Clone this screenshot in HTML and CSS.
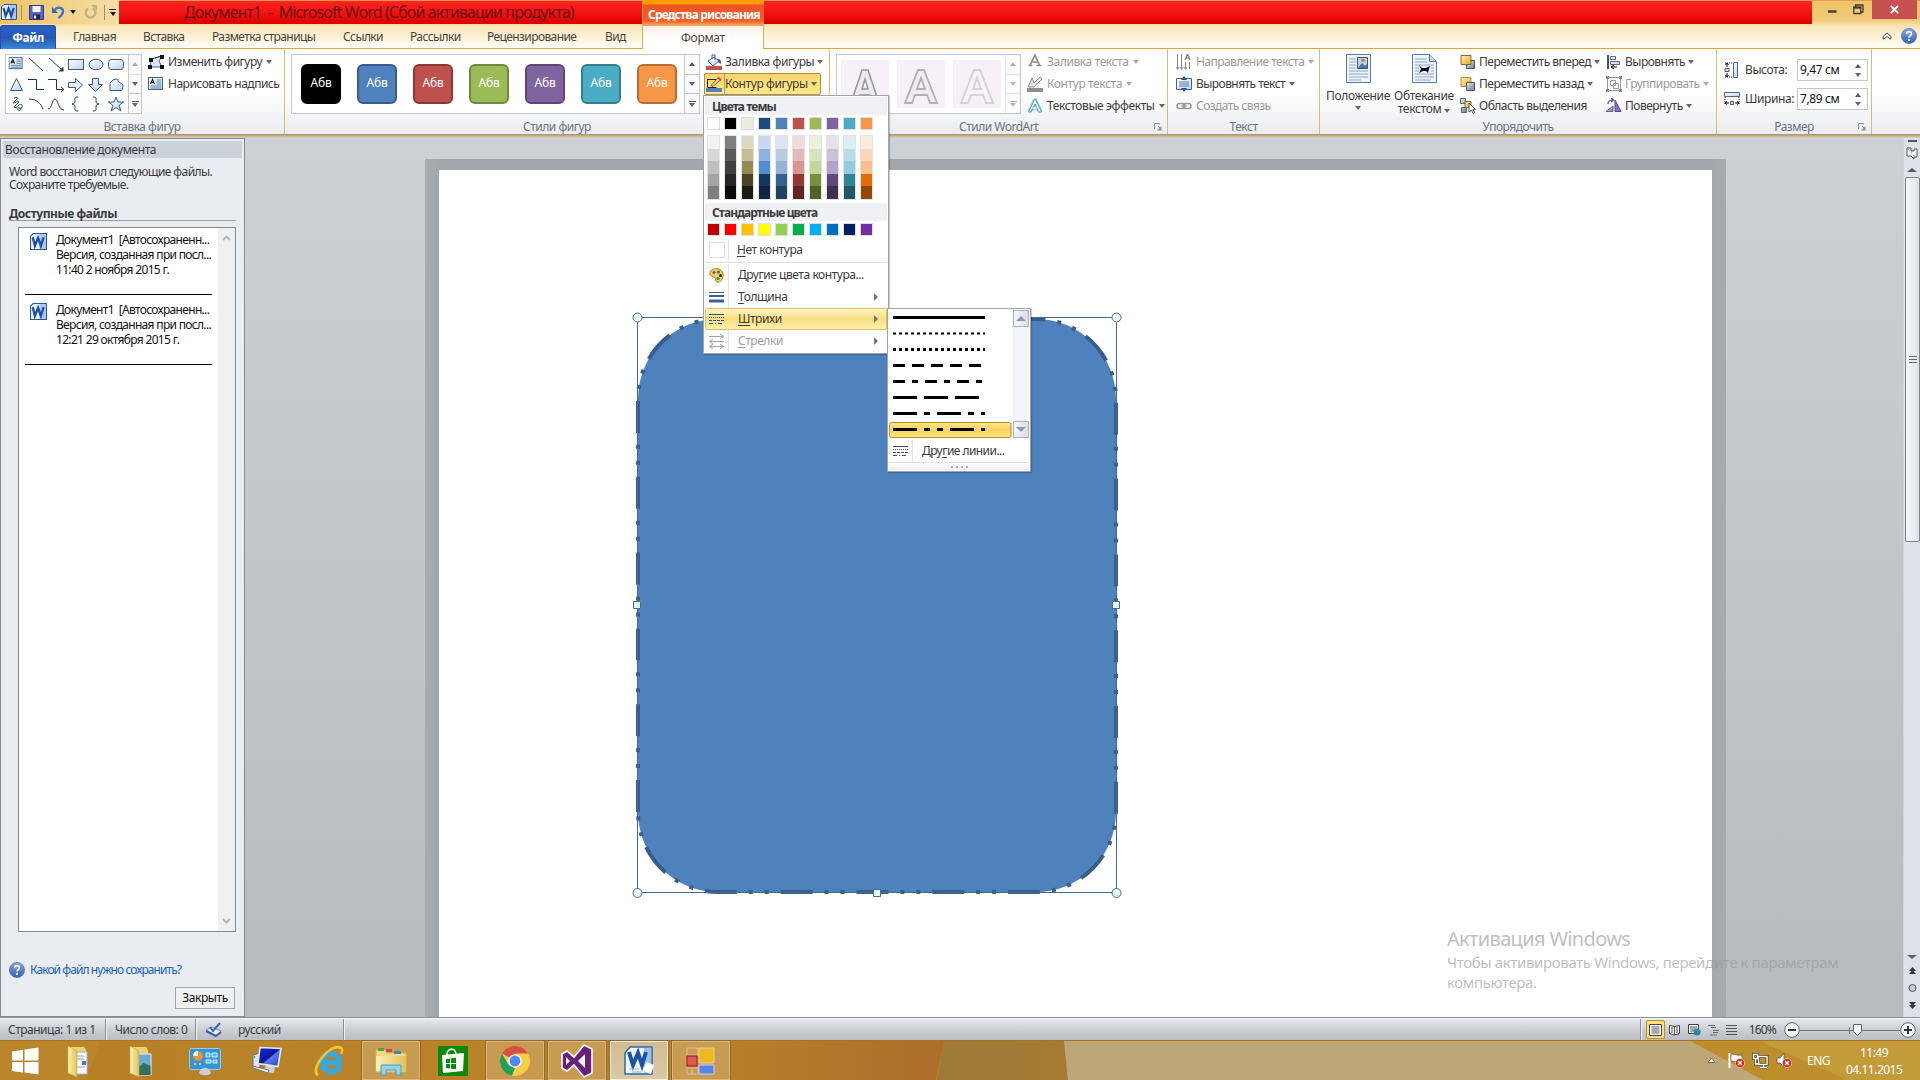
FILE: index.html
```html
<!DOCTYPE html>
<html lang="ru">
<head>
<meta charset="utf-8">
<title>Документ1 - Microsoft Word</title>
<link rel="stylesheet" href="styles.css">
</head>
<body>
<svg class="defs" width="0" height="0">
  <defs>
    <linearGradient id="gBlue" x1="0" y1="0" x2="1" y2="1"><stop offset="0" stop-color="#fff"/><stop offset="1" stop-color="#bcd3ee"/></linearGradient>
    <linearGradient id="gGold" x1="0" y1="0" x2="1" y2="1"><stop offset="0" stop-color="#fff3b8"/><stop offset="1" stop-color="#e3a91f"/></linearGradient>
    <linearGradient id="gGrey" x1="0" y1="0" x2="1" y2="1"><stop offset="0" stop-color="#e8edf2"/><stop offset="1" stop-color="#6f7c8c"/></linearGradient>
    <linearGradient id="gFolder" x1="0" y1="0" x2="1" y2="0"><stop offset="0" stop-color="#fdf3b5"/><stop offset="1" stop-color="#e0c257"/></linearGradient>
    <linearGradient id="gScreen" x1="0" y1="0" x2="1" y2="1"><stop offset="0" stop-color="#1a2bd0"/><stop offset=".5" stop-color="#0a16a0"/><stop offset=".55" stop-color="#5b77ef"/><stop offset="1" stop-color="#1c38c8"/></linearGradient>
    <linearGradient id="gHelp" x1="0" y1="0" x2="0" y2="1"><stop offset="0" stop-color="#7fa7e0"/><stop offset="1" stop-color="#3763b4"/></linearGradient>
    <symbol id="word" viewBox="0 0 16 16"><path d="M3 .5h12.500v15H.5V3z" fill="#e9f1fb" stroke="#2b5797"/><path d="M9 1h6v14H9z" fill="#a9c6ec"/><path d="M2.600 4l2 8 3-7.500 2.600 7.500L12.800 4" fill="none" stroke="#1d4e9e" stroke-width="2.200"/></symbol>
    <symbol id="textbox" viewBox="0 0 16 16"><rect x=".5" y="1.500" width="14" height="12" fill="url(#gBlue)" stroke="#45648a"/><path d="M2.500 8L4.500 3.500 6.500 8M3.200 6.500h2.600" fill="none" stroke="#111" stroke-width="1.200"/><path d="M8.500 4h4.500M8.500 6h4.500M8.500 8h4.500M2.500 10h10.500M2.500 12h10.500" stroke="#6c88ad"/></symbol>
    <symbol id="help" viewBox="0 0 16 16"><circle cx="8" cy="8" r="7.600" fill="url(#gHelp)" stroke="#3a5f9e" stroke-width=".6"/><path d="M5.600 6.200c0-3.400 5-3.200 4.800-.3C10.300 7.600 8 7.500 8 9.600M8 11v2" fill="none" stroke="#fff" stroke-width="1.700"/></symbol>
    <symbol id="dashes" viewBox="0 0 16 12"><path d="M0 1.500h15" stroke="#2f4f85"/><path d="M0 4.500h15" stroke="#44536b" stroke-dasharray="1 1"/><path d="M0 7.500h15" stroke="#2f4f85" stroke-dasharray="3 1"/><path d="M0 10.500h15" stroke="#2f4f85" stroke-dasharray="4 2 1 2"/></symbol>
    <symbol id="launcher" viewBox="0 0 8 8"><path d="M.5 6V.5H6M4 3l3 3" fill="none" stroke="#8b929c"/><path d="M7.500 3v4.500H3z" fill="#8b929c"/></symbol>
    <symbol id="redx" viewBox="0 0 10 10"><circle cx="5" cy="5" r="4.600" fill="#d42a1e" stroke="#fff" stroke-width=".5"/><path d="M3 3l4 4M7 3L3 7" stroke="#fff" stroke-width="1.500"/></symbol>
  </defs>
</svg>

<header class="top">
  <div class="titlebar">
    <div class="qat">
      <svg width="16" height="16"><use href="#word"/></svg>
      <i class="vbar"></i>
      <svg class="save" width="15" height="15" viewBox="0 0 15 15"><path d="M.5 .5h14v14H.5z" fill="#5a62c4" stroke="#35398f"/><path d="M3.500 1h8v6h-8z" fill="#f5f8ff"/><path d="M4 9.500h7v5H4z" fill="#26284d"/><path d="M5 10.500h2v3H5z" fill="#fff"/></svg>
      <svg class="undo" width="14" height="14" viewBox="0 0 14 14"><path d="M1 2v6h6z" fill="#2d62bd"/><path d="M3 6C6 1 12 2 12 6.500 12 9.500 9.500 11 7.500 13" fill="none" stroke="#3f74c8" stroke-width="2.400"/></svg>
      <i class="tri dk"></i>
      <svg class="redo" width="14" height="14" viewBox="0 0 14 14"><path d="M9 3.500A4.800 4.800 0 1 1 4 3.600" fill="none" stroke="#c4b184" stroke-width="2.400"/><path d="M7 0h6v6z" fill="#c4b184"/></svg>
      <i class="vbar"></i>
      <span class="more"><b></b><i class="tri dk"></i></span>
    </div>
    <div class="caption"><span>Документ1&nbsp; -&nbsp; Microsoft Word (Сбой активации продукта)</span></div>
    <div class="context"><span>Средства рисования</span></div>
    <div class="caption wide"></div>
    <div class="winbtns">
      <svg class="min" width="9" height="3"><path d="M0 1.500h8.500" stroke="#3c3c3c" stroke-width="2.400"/></svg>
      <svg class="max" width="11" height="11" viewBox="0 0 11 11"><path d="M.8 3.500h7v6h-7zM2.500 3V1h7.500v7H8" fill="none" stroke="#3c3c3c" stroke-width="1.300"/><path d="M0 3.500h8.500" stroke="#3c3c3c" stroke-width="2"/></svg>
      <span class="close"><svg width="9" height="9" viewBox="0 0 9 9"><path d="M1 1l7 7M8 1L1 8" stroke="#fff" stroke-width="1.900"/></svg></span>
    </div>
  </div>
  <nav class="tabs">
    <span class="file">Файл</span>
    <div class="tablist"><span>Главная</span><span>Вставка</span><span>Разметка страницы</span><span>Ссылки</span><span>Рассылки</span><span>Рецензирование</span><span>Вид</span></div>
    <span class="active-tab">Формат</span>
    <span class="tabhelp">
      <svg width="10" height="8" viewBox="0 0 10 8"><path d="M1 4.500L5 1l4 3.500v2L8 7 5 4.500 2 7 1 6.500z" fill="#fff" stroke="#444"/></svg>
      <svg width="16" height="16"><use href="#help"/></svg>
    </span>
  </nav>
</header>

<section class="ribbon">
  <div class="group g-insert">
    <div class="body">
      <div class="shapes">
        <svg width="122" height="58" viewBox="0 0 122 58" fill="none" stroke="#3d5878">
          <g stroke="none"><use href="#textbox" x="2.500" y="1" width="15" height="15"/></g>
          <path d="M23 3l14 13M43 3l13 12" stroke="#223c5c"/><path d="M57.500 16.500v-5l-5 5z" fill="#223c5c" stroke="none"/>
          <rect x="62.500" y="4.500" width="15" height="10" fill="url(#gBlue)"/>
          <ellipse cx="90" cy="9.500" rx="7" ry="5.200" fill="url(#gBlue)"/>
          <rect x="102.500" y="4.500" width="15" height="10" rx="3" fill="url(#gBlue)"/>
          <path d="M10.500 23.500l6 12h-12z" fill="url(#gBlue)"/>
          <path d="M22 24.500h8.500v10H38M42 24.500h8.500v10H57M55 32l3 2.500-3 2.500" stroke="#1d3450"/>
          <path d="M62.500 27.500h7v-4l7 6.500-7 6.500v-4h-7zM86.500 23.500h6v6h4l-7 7-7-7h4z" fill="url(#gBlue)"/>
          <path d="M104 35.500v-7c2-4 6-5 8-4-1 4 6 3 5 7-1 2 0 4-2 4z" fill="url(#gBlue)"/>
          <path d="M8 43c5-2 4 1 1 3s-2 3 1 1 4 0 0 3 0 4 3 0c4-2 5 4 0 3s2 6 2 0" stroke="#1d3450"/>
          <path d="M23 44c8 0 12 5 14 10M42 54c4 0 4-10 7-10s3 11 9 11" stroke="#1d3450"/>
          <path d="M72 42c-4 0-3 2-3 4s-1 3-3 3c2 0 3 1 3 3s-1 4 3 4M87 42c4 0 3 2 3 4s1 3 3 3c-2 0-3 1-3 3s1 4-3 4" stroke="#1d3450"/>
          <path d="M110 42l2 5h5.500l-4.500 3.500 2 5.500-5-3.500-5 3.500 2-5.500-4.500-3.500h5.500z" fill="url(#gBlue)"/>
        </svg>
        <div class="strip"><span class="off"><i class="tri up"></i></span><span><i class="tri"></i></span><span><b></b><i class="tri"></i></span></div>
      </div>
      <div class="cmds">
        <div class="cmd"><svg viewBox="0 0 16 16"><path d="M2 13l1-8 11-3-3 5 3 6z" fill="#dbe7f6" stroke="#3d65a5"/><path d="M0 11h4v4H0zM12 11h4v4h-4zM12 1h4v4h-4zM1 4h4v4H1z" fill="#111"/><path d="M4 5L13 2" stroke="#111" stroke-dasharray="2 1"/></svg><span>Изменить фигуру</span><i class="tri"></i></div>
        <div class="cmd"><svg viewBox="0 0 16 16"><use href="#textbox"/></svg><span>Нарисовать надпись</span></div>
      </div>
    </div>
    <div class="cap">Вставка фигур</div>
  </div>

  <div class="group g-styles">
    <div class="body">
      <div class="gallery">
        <div class="tiles"><span class="t black">Абв</span><span class="t blue">Абв</span><span class="t red">Абв</span><span class="t green">Абв</span><span class="t purple">Абв</span><span class="t teal">Абв</span><span class="t orange">Абв</span></div>
        <div class="strip"><span><i class="tri up"></i></span><span><i class="tri"></i></span><span><b></b><i class="tri"></i></span></div>
      </div>
      <div class="cmds">
        <div class="cmd"><svg viewBox="0 0 16 16"><path d="M2 7l6-4 5 4-6 5z" fill="url(#gBlue)" stroke="#3f5f93"/><path d="M6 5V1h3v5" fill="none" stroke="#3f5f93"/><path d="M12 5c3 0 3 3 3 5l-3-2z" fill="#2f57a3"/><path d="M0 12h16v4H0z" fill="#c0504d"/></svg><span>Заливка фигуры</span><i class="tri"></i></div>
        <div class="cmd pressed"><svg viewBox="0 0 16 16"><path d="M1 3.500h10M1.500 3v8.500h9" fill="none" stroke="#222"/><path d="M5 9.500L12 2l2.500 2L7 10.500z" fill="#f7d88b" stroke="#7a5a2a"/><path d="M12 1.500l3 2.500" stroke="#c0504d" stroke-width="2"/><path d="M0 12h16v4H0z" fill="#4f81bd"/></svg><span>Контур фигуры</span><i class="tri"></i></div>
      </div>
    </div>
    <div class="cap">Стили фигур</div>
  </div>

  <div class="group g-wordart">
    <div class="body">
      <div class="gallery">
        <div class="wtiles">
          <svg viewBox="0 0 48 48"><path d="M10 43L21 10h6l11 33h-7l-2-8H19l-2 8zM21 29h6l-3-10z" fill="#ece9ef" stroke="#96959b" stroke-width="1.500"/></svg>
          <svg viewBox="0 0 48 48"><path d="M8 43L21 10h6l13 33h-7l-3-8H18l-3 8zM20 29h8l-4-11z" fill="#f0ebf1" stroke="#b3b0b5" stroke-width="1.800"/></svg>
          <svg viewBox="0 0 48 48"><path d="M8 43L21 10h6l13 33h-7l-3-8H18l-3 8zM20 29h8l-4-11z" fill="#f7f3f8" stroke="#d6d2d8" stroke-width="2"/></svg>
        </div>
        <div class="strip dim"><span><i class="tri up"></i></span><span><i class="tri"></i></span><span><b></b><i class="tri"></i></span></div>
      </div>
      <div class="cmds">
        <div class="cmd dis"><svg viewBox="0 0 16 16"><path d="M3 11.500L8 1l4.500 10.500M5 8h6M1.500 11.500h4M9.500 11.500h5" fill="none" stroke="#8e8e8e" stroke-width="1.700"/></svg><span>Заливка текста</span><i class="tri"></i></div>
        <div class="cmd dis"><svg viewBox="0 0 16 16"><path d="M1 11L5 2l2 5 6-6 2 2-8 8z" fill="#e5e5e5" stroke="#8e8e8e"/><path d="M0 12h16v4H0z" fill="#8e8e8e"/></svg><span>Контур текста</span><i class="tri"></i></div>
        <div class="cmd"><svg viewBox="0 0 16 16"><path d="M2.500 14L8 2.500 13.500 14M4.500 10h7" fill="none" stroke="#9bd0f3" stroke-width="4.500"/><path d="M2.500 14L8 2.500 13.500 14M4.500 10h7" fill="none" stroke="#fff" stroke-width="2"/><path d="M1.500 14L7.500 1.500h1L14.500 14h-3L8 6 4 14z" fill="none" stroke="#3f83bd" stroke-width=".8"/></svg><span>Текстовые эффекты</span><i class="tri"></i></div>
      </div>
    </div>
    <div class="cap">Стили WordArt<svg><use href="#launcher"/></svg></div>
  </div>

  <div class="group g-text">
    <div class="body">
      <div class="cmds">
        <div class="cmd dis"><svg viewBox="0 0 16 16"><path d="M1.500 0v15M5.500 0v15M9.500 8v7M13.500 8v7" stroke="#888"/><path d="M0 13l1.500 2.500L3 13M4 13l1.500 2.500L7 13M8 13l1.500 2.500L11 13" fill="none" stroke="#888" stroke-width=".8"/><path d="M9 6l2.500-6L14 6M10 4h3" fill="none" stroke="#777" stroke-width="1.200"/></svg><span>Направление текста</span><i class="tri"></i></div>
        <div class="cmd"><svg viewBox="0 0 16 16"><path d="M.5 2.500h15v11H.5z" fill="url(#gBlue)" stroke="#45648a"/><path d="M3 6h10M3 8h10M3 10h10" stroke="#5c7fae"/><path d="M8 0l3 4H5zM8 16l3-4H5z" fill="#2c4f94"/></svg><span>Выровнять текст</span><i class="tri"></i></div>
        <div class="cmd dis"><svg viewBox="0 0 16 16"><rect x="1" y="5.500" width="8" height="5" rx="2.500" fill="none" stroke="#999" stroke-width="1.500"/><rect x="7" y="5.500" width="8" height="5" rx="2.500" fill="none" stroke="#999" stroke-width="1.500"/><path d="M5 8h6" stroke="#999"/></svg><span>Создать связь</span></div>
      </div>
    </div>
    <div class="cap">Текст</div>
  </div>

  <div class="group g-arrange">
    <div class="body">
      <div class="big"><svg width="25" height="30" viewBox="0 0 25 30"><path d="M.5 .5h24v28H.5z" fill="#edf3fb" stroke="#5a7aa6"/><path d="M3 5h7M3 8h7M3 11h7M3 14h7M3 17h19M3 20h19M3 23h19M3 26h12" stroke="#8ca6cb"/><path d="M11.500 3.500h10v11h-10z" fill="#b8d3ef" stroke="#456"/><path d="M12 14l4-5 3 3 2-2v4z" fill="#4a70a8"/><circle cx="17" cy="6.500" r="1.800" fill="#e2703a"/></svg><span>Положение</span><i class="tri"></i></div>
      <div class="big b2"><svg width="25" height="30" viewBox="0 0 25 30"><path d="M.5 .5h17l7 7v21H.5z" fill="#edf3fb" stroke="#5a7aa6"/><path d="M17.500 .5v7h7" fill="#c6d8ee" stroke="#5a7aa6"/><path d="M3 5h12M3 8h12M3 11h19M3 14h4M3 17h4M19 14h3M19 17h3M3 20h19M3 23h19M3 26h16" stroke="#8ca6cb"/><path d="M7 11l3 3h4l4-2-1 3-1 4-2-2h-3l-4 2 2-4z" fill="#111"/></svg><span>Обтекание<br>текстом <i class="tri"></i></span></div>
      <div class="cmds c1">
        <div class="cmd"><svg viewBox="0 0 16 16"><path d="M6.500 6.500h8v8h-8z" fill="url(#gGrey)" stroke="#4a5563"/><path d="M1 1.500h10v9H1z" fill="url(#gGold)" stroke="#8a6a24"/></svg><span>Переместить вперед</span><i class="tri"></i></div>
        <div class="cmd"><svg viewBox="0 0 16 16"><path d="M1 1.500h10v9H1z" fill="url(#gGold)" stroke="#b59341"/><path d="M6.500 6.500h8v8h-8z" fill="url(#gGrey)" stroke="#4a5563"/></svg><span>Переместить назад</span><i class="tri"></i></div>
        <div class="cmd"><svg viewBox="0 0 16 16"><path d="M.5 .5h5v5h-5zM1.500 9.500h5v5h-5z" fill="url(#gGrey)" stroke="#5a6573"/><path d="M5 3.500h6v6H5z" fill="url(#gGold)" stroke="#8a6a24"/><path d="M9 5v9l2.500-2 1.500 3.500 1.500-1L13 11.500h2.500z" fill="#fff" stroke="#456"/></svg><span>Область выделения</span></div>
      </div>
      <div class="cmds c2">
        <div class="cmd"><svg viewBox="0 0 16 16"><path d="M2 1v14" stroke="#111" stroke-width="1.500"/><path d="M4.500 2.500h5v3h-5zM4.500 7.500h9v3h-9z" fill="url(#gBlue)" stroke="#54698a"/><path d="M5 13h6M8 11l-3 2 3 2" fill="none" stroke="#111"/></svg><span>Выровнять</span><i class="tri"></i></div>
        <div class="cmd dis"><svg viewBox="0 0 16 16"><path d="M1.500 1.500h13v13h-13zM4.500 4.500h5v5h-5zM7.500 7.500h5v5h-5z" fill="none" stroke="#999"/><path d="M0 0h3v3H0zM13 0h3v3h-3zM0 13h3v3H0zM13 13h3v3h-3z" fill="#888"/></svg><span>Группировать</span><i class="tri"></i></div>
        <div class="cmd"><svg viewBox="0 0 16 16"><path d="M0 13.500h7V8z" fill="url(#gGrey)" stroke="#667"/><path d="M9 13.500V2l6 11.500z" fill="#8a6cc4" stroke="#5e4596"/><path d="M2 6c0-4 3-4 5-4M5 0l2.500 2L5 4" fill="none" stroke="#2f57a3" stroke-width="1.200"/></svg><span>Повернуть</span><i class="tri"></i></div>
      </div>
    </div>
    <div class="cap">Упорядочить</div>
  </div>

  <div class="group g-size">
    <div class="body">
      <div class="field"><svg viewBox="0 0 16 16"><path d="M9.500 .5h4v15h-4z" fill="url(#gBlue)" stroke="#54698a"/><path d="M1 1h8M1 15h8" stroke="#111" stroke-dasharray="1 1"/><path d="M3 1v4M3 11v4M1.500 3L3 1l1.500 2M1.500 13L3 15l1.500-2" fill="none" stroke="#111"/><path d="M1 6.500h4v3H1z" fill="#ddd" stroke="#555"/></svg><span>Высота:</span><div class="num">9,47 см<em><i class="tri up"></i><i class="tri"></i></em></div></div>
      <div class="field"><svg viewBox="0 0 16 16"><path d="M.5 1.500h15v4H.5z" fill="url(#gBlue)" stroke="#54698a"/><path d="M1 6v8M15 6v8" stroke="#111" stroke-dasharray="1 1"/><path d="M1 12h4M11 12h4M3 10.500L1 12l2 1.500M13 10.500l2 1.500-2 1.500" fill="none" stroke="#111"/><path d="M6.500 10.500h3v3h-3z" fill="#ddd" stroke="#555"/></svg><span>Ширина:</span><div class="num">7,89 см<em><i class="tri up"></i><i class="tri"></i></em></div></div>
    </div>
    <div class="cap">Размер<svg><use href="#launcher"/></svg></div>
  </div>
</section>

<main class="work">
  <aside class="pane">
    <h2>Восстановление документа</h2>
    <p>Word восстановил следующие файлы.<br>Сохраните требуемые.</p>
    <h3>Доступные файлы</h3>
    <div class="list">
      <div class="entries">
        <div class="entry"><svg width="17" height="17"><use href="#word"/></svg><div><span>Документ1&nbsp; [Автосохраненн...</span><span>Версия, созданная при посл...</span><span>11:40 2 ноября 2015 г.</span></div></div>
        <div class="entry"><svg width="17" height="17"><use href="#word"/></svg><div><span>Документ1&nbsp; [Автосохраненн...</span><span>Версия, созданная при посл...</span><span>12:21 29 октября 2015 г.</span></div></div>
      </div>
      <div class="lscroll"><svg width="9" height="6"><path d="M1 5l3.500-3.500L8 5" fill="none" stroke="#b4b4b4" stroke-width="1.800"/></svg><svg width="9" height="6"><path d="M1 1l3.500 3.500L8 1" fill="none" stroke="#b4b4b4" stroke-width="1.800"/></svg></div>
    </div>
    <div class="link"><svg width="16" height="16"><use href="#help"/></svg><span>Какой файл нужно сохранить?</span></div>
    <div class="btn">Закрыть</div>
  </aside>
  <div class="canvas"><div class="sheetshadow"><div class="sheet">
    <svg class="drawing" width="494" height="590" viewBox="629 309 494 590">
      <path d="M638 812V399A80 80 0 0 1 718 319H1036A80 80 0 0 1 1116 399V812A80 80 0 0 1 1036 892H718A80 80 0 0 1 638 812Z" fill="#4f81bd"/>
      <path d="M638 812V399A80 80 0 0 1 718 319H1036A80 80 0 0 1 1116 399V812A80 80 0 0 1 1036 892H718A80 80 0 0 1 638 812" pathLength="1968.500" fill="none" stroke="#385d8a" stroke-width="4" stroke-dasharray="32 12 4 12 4 12"/>
      <path d="M637.500 317.500h479v575h-479z" fill="none" stroke="#47688c"/>
      <g fill="#e2f7fa" stroke="#4d6d80"><circle cx="637.500" cy="317.500" r="4.500"/><circle cx="1116.500" cy="317.500" r="4.500"/><circle cx="637.500" cy="893" r="4.500"/><circle cx="1116.500" cy="893" r="4.500"/><path d="M633.500 601.500h7v7h-7zM1112.500 601.500h7v7h-7zM873.500 889.500h7v7h-7z"/></g>
    </svg>
  </div></div></div>
  <div class="vscroll">
    <b class="split"></b>
    <svg class="ruler" width="12" height="13" viewBox="0 0 12 13"><path d="M1 1h4v3h3V2h3v8H8v2L5 9H1z" fill="#fff" stroke="#555"/><path d="M2 2l7 8" stroke="#777" stroke-dasharray="1 1"/></svg>
    <i class="tri up"></i>
    <div class="track"><div class="thumb"><b></b><b></b><b></b></div></div>
    <i class="tri dn"></i>
    <svg class="nav" width="9" height="54" viewBox="0 0 9 54" fill="#333"><path d="M4.500 8L8 12H1zM4.500 11L8 15H1zM1 43h7L4.500 47zM1 46h7l-3.500 4z"/><circle cx="4.500" cy="29" r="3.500" fill="#c9cdd3" stroke="#555"/></svg>
  </div>
</main>

<footer class="status">
  <span class="s1">Страница: 1 из 1</span><i></i><span class="s2">Число слов: 0</span><i></i>
  <svg class="proof" width="18" height="16" viewBox="0 0 18 16"><path d="M1 8l6-3 9 4-5 5z" fill="#eef3fb" stroke="#7286ad"/><path d="M1 9l10 5 5-4" fill="none" stroke="#3f5fa5" stroke-width="2"/><path d="M5 5l3 4L15 1" fill="none" stroke="#3c66bb" stroke-width="2"/></svg>
  <span class="s3">русский</span><i></i>
  <div class="views">
    <i></i>
    <span class="on"><svg width="13" height="12"><path d="M.5 .5h12v11H.5z" fill="#fff" stroke="#444"/><path d="M2.500 3h8M2.500 5h8M2.500 7h8M2.500 9h8" stroke="#555"/></svg></span>
    <svg width="12" height="12" viewBox="0 0 12 12"><path d="M.5 1.500l5 1 5-1v8l-5 1.500-5-1.500zM5.500 2.500V11" fill="#fff" stroke="#444"/><path d="M2 4h2M2 6h2M2 8h2M7 4h2M7 6h2M7 8h2" stroke="#444"/></svg>
    <svg width="13" height="12" viewBox="0 0 13 12"><path d="M.5 .5h10v9H.5z" fill="#fff" stroke="#444"/><path d="M2 3h7M2 5h7M2 7h5" stroke="#555"/><circle cx="9" cy="8" r="3.500" fill="#2f7fb0"/><path d="M7 8c1-2 3 0 4-2" stroke="#5fb04a" fill="none"/></svg>
    <svg width="11" height="12" viewBox="0 0 11 12"><path d="M0 1.500h7M3 3.500h5M5 6.500h6M5 8.500h5M2 11h7" stroke="#666"/></svg>
    <svg width="11" height="12" viewBox="0 0 11 12"><path d="M0 1.500h11M0 4.500h11M0 7.500h11M0 10.500h11" stroke="#555"/></svg>
    <span class="pct">160%</span>
  </div>
  <svg class="zoom" width="133" height="20" viewBox="0 0 133 20"><path d="M17 10.500h100" stroke="#777"/><path d="M66.500 7v7" stroke="#777"/><circle cx="9" cy="10" r="7.300" fill="#f4f5f7" stroke="#666"/><circle cx="125" cy="10" r="7.300" fill="#f4f5f7" stroke="#666"/><path d="M5 10h8M121 10h8M125 6v8" stroke="#333" stroke-width="2"/><path d="M70.500 4.500h8v7l-4 4-4-4z" fill="#f4f5f7" stroke="#666"/></svg>
</footer>

<footer class="taskbar">
  <svg class="wall" width="1920" height="40" viewBox="0 0 1920 40" preserveAspectRatio="none">
    <defs><linearGradient id="w1"><stop offset="0" stop-color="#b67d22"/><stop offset=".25" stop-color="#b98329"/><stop offset=".75" stop-color="#b9822a"/><stop offset="1" stop-color="#ad6c2b"/></linearGradient><linearGradient id="w2"><stop offset="0" stop-color="#9d7b38"/><stop offset="1" stop-color="#a57a33"/></linearGradient></defs>
    <path d="M0 0h1920v40H0z" fill="#b67d22"/><path d="M0 0h944l-9 40H0z" fill="url(#w1)"/><path d="M0 0h100L86 40H0z" fill="#c0913a" opacity=".35"/>
    <path d="M944 0h120l4 40H937z" fill="url(#w2)"/><path d="M1064 0h640l60 40H1068z" fill="#bda677"/><path d="M1690 0h230v40h-155z" fill="#bd8f2c"/><path d="M1760 0h160v40h-70z" fill="#c39b38"/>
  </svg>
  <div class="apps">
    <span><svg width="28" height="28" viewBox="0 0 28 28"><path d="M1 4.500l11-1.700v10.700H1zM13.500 2.500L27.500.5v13h-14zM1 15h11v10.500L1 24zM13.500 15h14v12.500l-14-2z" fill="#fff"/></svg></span>
    <span class="f"><svg width="32" height="34" viewBox="0 0 32 34"><path d="M5 3h16l2 3v24H6z" fill="#ead27a"/><path d="M12 8h12v22H12z" fill="#f4f7fc" stroke="#a9b4c5"/><path d="M14 12h7M14 15h7M14 23h8" stroke="#8fa7c8"/><path d="M19 17h4v4h-4z" fill="#3f7ec2"/><path d="M5 2l9 5v26l-9-4z" fill="url(#gFolder)" stroke="#c9a947" stroke-width=".6"/></svg></span>
    <span class="f"><svg width="32" height="34" viewBox="0 0 32 34"><path d="M5 3h16l2 3v24H6z" fill="#ead27a"/><path d="M12 10h14v21H12z" fill="#6aaad8" stroke="#e9edf2"/><path d="M12.500 24l6-5 7 3v9h-13z" fill="#34705f"/><path d="M5 2l9 5v26l-9-4z" fill="url(#gFolder)" stroke="#c9a947" stroke-width=".6"/></svg></span>
    <span><svg width="32" height="30" viewBox="0 0 32 30"><rect x=".5" y="2.500" width="31" height="21" rx="2" fill="#3594d4" stroke="#9bcbe8"/><circle cx="9" cy="10" r="5" fill="#e9923a"/><path d="M9 10V5a5 5 0 0 0-5 5z" fill="#fff"/><path d="M17 7h4v4h-4zM23 7h5v4h-5zM17 14h5v3h-5zM24 14h4v3h-4z" fill="#5bb7e8" stroke="#d4efff"/><path d="M5 18h2M10 18h2" stroke="#ffc14a" stroke-width="2"/><path d="M10 27c2-7 10-7 12 0-2 3-10 3-12 0z" fill="#c9cfd4"/></svg></span>
    <span><svg width="32" height="30" viewBox="0 0 32 30"><path d="M2 9l7-2v15l-7-1z" fill="#dfe4ea" stroke="#68727f"/><path d="M15 19l-2 7 10 1 1-7z" fill="#cdd3da"/><path d="M9 1.500l21 1-3 18-20-3z" fill="url(#gScreen)" stroke="#e6e9ee" stroke-width="1.600"/><path d="M1 20l17 4-1 3-15-5z" fill="#eceff3" stroke="#777"/><circle cx="3.500" cy="11" r="1" fill="#33c15a"/></svg></span>
    <span><svg width="32" height="32" viewBox="0 0 32 32"><path d="M27 21c-4 9-18 7-18-4S26.500 6 26.500 17.500H10" fill="none" stroke="#35a8e6" stroke-width="5.500"/><path d="M5 30C-4 25 17-3 28 3c2 1 1 4 0 6" fill="none" stroke="#f3c22f" stroke-width="2.600"/></svg></span>
    <span class="run"><svg width="34" height="32" viewBox="0 0 34 32"><path d="M2 5h9l2 3h19v19H2z" fill="#f1da86" stroke="#d6b84e"/><path d="M4 3h6v3H4z" fill="#4aa546"/><path d="M12 4h6v3h-6z" fill="#d5473b"/><path d="M20 6h7v3h-7z" fill="#3e86c9"/><path d="M2 11h30v15H2z" fill="url(#gFolder)"/><path d="M7 30V20h20v10h-5v-5H12v5z" fill="#93d1ee" stroke="#4a9fc9"/></svg></span>
    <span><svg width="30" height="30" viewBox="0 0 30 30"><path d="M0 0h30v30H0z" fill="#0a8a0a"/><path d="M4 9l22-2-1 18-20 2z" fill="#fff"/><path d="M9 9c0-7 8-8 9-1" fill="none" stroke="#fff" stroke-width="1.500"/><path d="M8 13l4-.5v4.500H8zM13 12.300l5-.6V17h-5zM8 18h4v4.500l-4-.5zM13 18h5v5.300l-5-.6z" fill="#0a8a0a"/></svg></span>
    <span class="run"><svg width="30" height="30" viewBox="0 0 30 30"><circle cx="15" cy="15" r="15" fill="#f7cf45"/><path d="M15 15L2 7.500A15 15 0 0 1 28 7.500H15z" fill="#d84f43"/><path d="M2 7.500L8.500 19 15 22l-3 7.700A15 15 0 0 1 2 7.500z" fill="#1fa05c"/><circle cx="15" cy="15" r="6.800" fill="#fff"/><circle cx="15" cy="15" r="5.400" fill="#4a8af4"/></svg></span>
    <span class="run"><svg width="34" height="34" viewBox="0 0 34 34"><path d="M2 10l5-3 7 6L24 1l8 4v24l-8 4-10-12-7 6-5-3z" fill="#68217a" stroke="#fff" stroke-width="1.600"/><path d="M6 13v8l4-4zM25 10l-7 7 7 7z" fill="#fff"/></svg></span>
    <span class="run act"><svg width="30" height="30" viewBox="0 0 30 30"><path d="M6 1h22v27H1V7z" fill="#eef4fc" stroke="#2b6aa8" stroke-width="1.500"/><path d="M20 2h7v25h-7z" fill="#9fc3e8"/><path d="M5 6l4 13L14 7l4 12 4-13" fill="none" stroke="#1c53a6" stroke-width="4"/><path d="M5 23h10M8 26h10" stroke="#9fb3d0"/><path d="M22 16l8 3-3 9-8-3z" fill="#fff"/></svg></span>
    <span class="run"><svg width="30" height="28" viewBox="0 0 30 28"><path d="M1 1h11v7H1zM1 21h11v6H1zM6 21v6" fill="none" stroke="#e0c08e"/><path d="M1 9h10v10H1z" fill="#e0594e" stroke="#8d1f1a"/><path d="M13 1h15v15H13z" fill="#efb91c" stroke="#d8d0b0"/><path d="M13 18h15v9H13z" fill="#5585e6" stroke="#c9d3ee"/></svg></span>
  </div>
  <div class="tray">
    <svg width="9" height="7" viewBox="0 0 9 7"><path d="M4.500 1L8 5.500H1z" fill="#fff" stroke="#4c4030" stroke-width=".7"/></svg>
    <svg width="17" height="17" viewBox="0 0 17 17"><path d="M1.500 1v15" stroke="#fff" stroke-width="2"/><path d="M3 2c5 0 5 2 11 1v7c-6 1-6-1-11-1z" fill="#fff" stroke="#4c4030" stroke-width=".6"/><use href="#redx" x="7" y="6" width="10" height="10"/></svg>
    <svg width="17" height="17" viewBox="0 0 17 17"><path d="M6 4.500h9v8H7zM8 15.500h7M11.500 12v3M1.500 2.500h4v4h-4zM3.500 7v5H7" fill="none" stroke="#4c4030" stroke-width="3"/><path d="M6 4.500h9v8H7zM8 15.500h7M11.500 12v3M1.500 2.500h4v4h-4zM3.500 7v5H7" fill="none" stroke="#fff" stroke-width="1.400"/></svg>
    <svg width="17" height="17" viewBox="0 0 17 17"><path d="M1 6h3l4-5v14l-4-4H1z" fill="#fff" stroke="#4c4030" stroke-width=".7"/><use href="#redx" x="6" y="6" width="10" height="10"/></svg>
    <span class="lang">ENG</span>
    <span class="clock">11:49<br>04.11.2015</span>
  </div>
</footer>

<div class="menu">
  <h4>Цвета темы</h4>
  <div class="swatches">
    <b class="x-fff"></b><b class="x-000"></b><b class="x-eee"></b><b class="x-nav"></b><b class="x-blu"></b><b class="x-red"></b><b class="x-grn"></b><b class="x-pur"></b><b class="x-tea"></b><b class="x-org"></b>
  </div>
  <div class="ramps"><b class="r1"></b><b class="r2"></b><b class="r3"></b><b class="r4"></b><b class="r5"></b><b class="r6"></b><b class="r7"></b><b class="r8"></b><b class="r9"></b><b class="r10"></b></div>
  <h4 class="second">Стандартные цвета</h4>
  <div class="swatches std"><b class="s-1"></b><b class="s-2"></b><b class="s-3"></b><b class="s-4"></b><b class="s-5"></b><b class="s-6"></b><b class="s-7"></b><b class="s-8"></b><b class="s-9"></b><b class="s-10"></b></div>
  <div class="item none"><span class="mi"><b class="empty"></b></span><span class="lbl"><u>Н</u>ет контура</span></div>
  <div class="item sep"><span class="mi"><svg width="15" height="15" viewBox="0 0 15 15"><path d="M2 3C5-1 13 0 14 6c1 5-3 9-6 8-3-2 0-4-3-5S-1 7 2 3z" fill="#f4d766" stroke="#a07a20"/><circle cx="5" cy="4.500" r="1.500" fill="#c33"/><circle cx="9.500" cy="4" r="1.500" fill="#26a"/><circle cx="11.500" cy="7.500" r="1.500" fill="#222"/><circle cx="9" cy="10.500" r="1.700" fill="#3a3"/></svg></span><span class="lbl">Дру<u>г</u>ие цвета контура...</span></div>
  <div class="item"><span class="mi"><svg width="15" height="11"><path d="M0 .5h15" stroke="#3b5f94"/><path d="M0 4h15" stroke="#3b5f94" stroke-width="2"/><path d="M0 9h15" stroke="#3b5f94" stroke-width="3"/></svg></span><span class="lbl"><u>Т</u>олщина</span><i class="arr"></i></div>
  <div class="item hot"><span class="mi"><svg width="16" height="12"><use href="#dashes"/></svg></span><span class="lbl"><u>Ш</u>трихи</span><i class="arr"></i></div>
  <div class="item dis"><span class="mi"><svg width="16" height="15" viewBox="0 0 16 15" fill="none" stroke="#a0a0a0"><path d="M0 2.500h14M11 0l3.500 2.500L11 5M1 7.500h14M4 5L.5 7.500 4 10M1 12.500h14M11 10l3.500 2.500L11 15M4 10L.5 12.500 4 15"/></svg></span><span class="lbl"><u>С</u>трелки</span><i class="arr"></i></div>
</div>

<div class="submenu">
  <div class="lines">
    <svg width="124" height="130" viewBox="0 0 124 130" stroke="#000" stroke-width="3">
      <defs><linearGradient id="sel" x1="0" y1="0" x2="0" y2="1"><stop offset="0" stop-color="#ffe58d"/><stop offset=".5" stop-color="#fbd260"/><stop offset="1" stop-color="#ffe680"/></linearGradient></defs>
      <rect x=".5" y="113.500" width="121.500" height="15" rx="2" fill="url(#sel)" stroke="#b98d31" stroke-width="1"/>
      <path d="M4 8.500h92"/><path d="M4 24.500h92" stroke-width="2" stroke-dasharray="3 3"/><path d="M4 40.500h92" stroke-dasharray="3 3"/><path d="M4 56.500h92" stroke-dasharray="12 7"/><path d="M4 72.500h90" stroke-dasharray="12 7 6 7"/><path d="M4 88.500h87" stroke-dasharray="24 7"/><path d="M4 104.500h92" stroke-dasharray="24 7 6 7"/><path d="M4 120.500h92" stroke-dasharray="24 7 6 7 6 7"/>
    </svg>
    <div class="sscroll"><span><i class="tri up"></i></span><span><i class="tri"></i></span></div>
  </div>
  <div class="item"><span class="mi"><svg width="16" height="12"><use href="#dashes"/></svg></span><span class="lbl">Дру<u>г</u>ие линии...</span></div>
  <div class="grip"><b></b><b></b><b></b><b></b></div>
</div>

<div class="watermark"><strong>Активация Windows</strong><span>Чтобы активировать Windows, перейдите к параметрам компьютера.</span></div>
</body>
</html>
```
FILE: styles.css
```css
* { box-sizing: border-box; }
body { margin: 0; width: 1920px; height: 1080px; overflow: hidden; display: flex; flex-direction: column; font: 12px/16px "Noto Sans", "Open Sans", sans-serif; color: #3b3b3b; letter-spacing: -.5px; white-space: nowrap; }
.defs { position: absolute; }
svg { display: block; flex: none; }
h2, h3, h4, p { margin: 0; font-size: 12px; font-weight: normal; }
.tri { display: inline-block; flex: none; width: 0; height: 0; border: 3px solid transparent; border-top: 4px solid #666; border-bottom: 0; }
.tri.up { border-top: 0; border-bottom: 4px solid #555; }
.tri.dk { border-top-color: #111; }

/* title bar and tabs */
.top { height: 49px; background: linear-gradient(#eec468 0, #f0ca78 20px, #f9e4b5 26px, #fffaf0 45px); border-bottom: 1px solid #dba63f; box-shadow: inset 0 1px #e89c50; }
.titlebar { height: 24px; display: flex; }
.qat { width: 119px; display: flex; align-items: center; padding-left: 1px; background: linear-gradient(90deg, #eec368, #f6dea6); }
.qat .vbar { width: 1px; height: 15px; background: #a98d56; margin-left: 4px; }
.qat .save { margin-left: 7px; }
.qat .undo { margin-left: 7px; }
.qat .tri { margin-left: 5px; }
.qat .redo { margin-left: 8px; margin-right: 2px; }
.qat .more { display: flex; flex-direction: column; align-items: center; margin-left: 4px; }
.qat .more b { width: 7px; height: 1px; background: #111; margin-bottom: 2px; }
.qat .more .tri { margin: 0; }
.caption { width: 523px; margin-top: 1px; height: 23px; background: linear-gradient(#ff2420, #ee1010 60%, #da0000); padding-left: 65px; font-size: 16px; line-height: 23px; color: #6b0d0d; letter-spacing: -.89px; }
.caption.wide { width: 1048px; }
.context { width: 122px; height: 25px; background: linear-gradient(#ff9c00 0, #ff9c00 4px, #ee5426 5px, #f0602c 21px, #ff9e63); color: #fff; font-weight: bold; padding: 7px 0 0 5px; border-left: 1px solid #e9a03a; letter-spacing: -.82px; }
.winbtns { flex: 1; display: flex; }
.winbtns .min { margin: 10px 0 0 16px; }
.winbtns .max { margin: 4px 0 0 16px; }
.winbtns .close { width: 45px; height: 19px; margin-left: 8px; background: #c75050; display: grid; place-items: center; }
.tabs { height: 25px; display: flex; align-items: flex-start; line-height: 24px; color: #4b4438; letter-spacing: -.6px; }
.file { width: 56px; height: 24px; margin-top: 1px; border-radius: 3px 3px 0 0; background: linear-gradient(#2a62c4, #2558b6 50%, #3c84d8); color: #fff; font-weight: bold; text-align: center; line-height: 23px; border: 1px solid #2350a4; border-bottom: 0; letter-spacing: -.5px; }
.tablist { width: 586px; padding-left: 17px; display: grid; grid-template-columns: 42px 41px 103px 39px 49px 90px 20px; column-gap: 28px; padding-top: 1px; }
.active-tab { width: 122px; height: 25px; margin-top: 1px; background: linear-gradient(#fdeee6, #fff 12px); border: 1px solid #e0ac4c; border-bottom: 0; text-align: center; line-height: 23px; letter-spacing: -.3px; }
.tabhelp { margin-left: auto; display: flex; align-items: center; gap: 9px; padding: 4px 3px 0 0; }

/* ribbon */
.ribbon { height: 89px; display: flex; background: linear-gradient(#fff 0, #fff 45px, #ebedf1 82px, #e9ebef 85px, #b89a66 85px, #b89a66 86px, #cbb892 87px, #cdd0d5 89px); }
.group { height: 85px; border-right: 1px solid #dcbb74; display: flex; flex-direction: column; }
.g-insert { width: 285px; } .g-styles { width: 545px; } .g-wordart { width: 338px; } .g-text { width: 152px; } .g-arrange { width: 397px; } .g-size { width: 155px; }
.body { height: 68px; display: flex; padding-top: 2px; }
.cap { text-align: center; color: #6b7380; line-height: 20px; height: 17px; position: relative; }
.cap svg { position: absolute; right: 5px; top: 6px; width: 8px; height: 8px; }
.cmds { display: flex; flex-direction: column; }
.cmd { height: 22px; display: flex; align-items: center; gap: 4px; }
.cmd svg { width: 16px; height: 16px; }
.dis { color: #9a9a9a; }
.dis .tri { border-top-color: #aaa; }
.shapes { width: 137px; height: 60px; margin: 3px 6px 0 5px; border: 1px solid #c3c8cf; background: #fff; display: flex; }
.strip { width: 15px; margin-left: auto; border-left: 1px solid #c3c8cf; display: flex; flex-direction: column; background: #f8f9fb; }
.strip span { flex: 1; display: flex; flex-direction: column; align-items: center; justify-content: center; gap: 1px; border-bottom: 1px solid #c3c8cf; }
.strip span:last-child { border: 0; }
.strip b { width: 7px; height: 1px; background: #555; }
.strip .off, .strip.dim { opacity: .45; }
.gallery { height: 60px; margin: 3px 0 0 6px; border: 1px solid #c3c8cf; background: #fff; display: flex; }
.g-styles .gallery { width: 409px; margin-right: 4px; }
.g-wordart .gallery { width: 185px; margin-right: 6px; }
.tiles { display: flex; gap: 16px; padding: 9px 0 0 9px; letter-spacing: -.2px; }
.t { width: 40px; height: 40px; border-radius: 6px; border: 2px solid; color: #fff; text-align: center; line-height: 33px; }
.black { background: #000; border-color: #000; } .blue { background: #4f81bd; border-color: #385d8a; } .red { background: #c0504d; border-color: #8c3836; } .green { background: #9bbb59; border-color: #71893f; } .purple { background: #8064a2; border-color: #5c4776; } .teal { background: #4bacc6; border-color: #357d91; } .orange { background: #f79646; border-color: #b66d31; }
.wtiles { display: flex; gap: 8px; padding: 5px 0 0 4px; }
.wtiles svg { width: 48px; height: 48px; background: #f5f1f7; }
.g-styles .cmd { width: 117px; gap: 3px; border: 1px solid transparent; padding-left: 1px; letter-spacing: -.4px; }
.g-styles .pressed { border-color: #b98d31; border-radius: 2px; background: linear-gradient(90deg, transparent 19px, #c79a3c 19px, #c79a3c 20px, transparent 20px), linear-gradient(#fbd46b, #ffe27c 60%, #ffe88e); }
.g-wordart .cmd { letter-spacing: -.4px; }
.g-text .cmds { padding-left: 8px; }
.g-text .cmd { gap: 4px; letter-spacing: -.55px; }
.big { width: 68px; display: flex; flex-direction: column; align-items: center; margin-left: 4px; padding-top: 3px; letter-spacing: -.3px; }
.big span { margin-top: 5px; text-align: center; line-height: 13px; }
.big > .tri { margin-top: 4px; }
.big.b2 { margin-left: -2px; }
.c1 { width: 146px; margin-left: 2px; }
.g-arrange .cmd { gap: 3px; }
.g-size .body { flex-direction: column; padding: 10px 0 0 7px; gap: 7px; }
.field { display: flex; height: 22px; align-items: center; gap: 5px; letter-spacing: -.4px; }
.field svg { width: 16px; height: 16px; }
.field span { width: 47px; }
.num { width: 71px; height: 22px; border: 1px solid #c3c8cf; background: #fff; color: #111; line-height: 20px; padding: 0 6px 0 2px; display: flex; justify-content: space-between; }
.num em { display: flex; flex-direction: column; justify-content: center; gap: 5px; }

/* work area */
.work { height: 880px; display: flex; background: linear-gradient(#cdd0d5, #b7babf); border-bottom: 1px solid #8c9097; }
.pane { width: 245px; background: #e9ecf1; border: 1px solid #868b94; padding: 2px 2px 0; letter-spacing: -.6px; }
.pane h2 { background: #ccd2da; height: 17px; line-height: 17px; padding-left: 2px; letter-spacing: -.4px; }
.pane p { line-height: 13px; margin: 7px 0 0 6px; }
.pane h3 { font-weight: bold; margin: 15px 6px 0; height: 15px; line-height: 15px; border-bottom: 1px solid #9aa0a8; letter-spacing: -.45px; }
.list { width: 218px; height: 705px; margin: 6px 0 0 15px; border: 1px solid #828790; background: #fff; display: flex; justify-content: space-between; color: #111; }
.entries { padding-left: 6px; width: 193px; letter-spacing: -.68px; }
.entry { height: 70px; display: flex; padding: 5px 0 0 5px; border-bottom: 1px solid #000; gap: 9px; }
.entry:first-child { height: 67px; }
.entry div { display: flex; flex-direction: column; line-height: 15px; margin-top: -1px; }
.entry:first-child + .entry { padding-top: 8px; }
.lscroll { width: 17px; background: #f0f0f0; display: flex; flex-direction: column; justify-content: space-between; align-items: center; padding: 7px 0; }
.link { display: flex; gap: 5px; margin: 30px 0 0 6px; color: #1a62b8; letter-spacing: -.93px; }
.btn { width: 60px; height: 22px; border: 1px solid #a5a5a5; background: #f0f0f0; color: #111; text-align: center; line-height: 20px; margin: 9px 0 0 172px; letter-spacing: -.4px; }
.canvas { flex: 1; padding: 21px 0 0 180px; overflow: hidden; }
.sheetshadow { width: 1301px; height: 860px; background: linear-gradient(90deg, #a9adb2, #a3a6ab 14px, #a3a6ab 1287px, #a7abb0); padding: 11px 14px 0; }
.sheet { width: 1273px; height: 849px; background: #fff; position: relative; }
.drawing { position: absolute; left: 190px; top: 139px; }
.vscroll { width: 17px; background: #dde2ea; display: flex; flex-direction: column; align-items: center; border-left: 1px solid #cfd4dc; }
.split { width: 9px; height: 2px; background: #555; margin-top: 2px; }
.ruler { margin-top: 5px; }
.vscroll .tri { border-left-width: 5px; border-right-width: 5px; margin-top: 8px; }
.track { height: 774px; margin-top: 5px; width: 100%; padding: 0 0 0 1px; }
.thumb { width: 15px; height: 365px; border: 1px solid #7d838c; border-radius: 2px; background: linear-gradient(90deg, #f6f7f9, #dfe3e9); display: flex; flex-direction: column; align-items: center; justify-content: center; gap: 2px; }
.thumb b { width: 8px; height: 1px; background: #666; }
.vscroll .tri.dn { margin-top: 4px; }

/* status bar */
.status { height: 22px; display: flex; align-items: center; background: linear-gradient(#e4e7ec, #c3c7cc 70%, #bcc0c5); border-top: 1px solid #f4f5f7; }
.status > i, .views > i { width: 1px; height: 21px; background: #8b9097; border-right: 1px solid #f0f0f0; box-sizing: content-box; }
.s1 { width: 105px; padding-left: 8px; } .s2 { width: 88px; padding-left: 8px; } .s3 { width: 105px; letter-spacing: -.4px; }
.proof { margin: 0 15px 0 8px; }
.views { margin-left: auto; display: flex; align-items: center; gap: 7px; }
.views .on { width: 19px; height: 19px; background: #ffe07a; border: 1px solid #b98d31; border-radius: 2px; display: grid; place-items: center; margin: 0 -3px 0 -3px; }
.pct { margin-left: 5px; letter-spacing: -.8px; }
.zoom { margin-left: 7px; margin-right: 4px; }

/* taskbar */
.taskbar { height: 40px; position: relative; display: flex; justify-content: space-between; border-top: 1px solid #a8741f; }
.wall { position: absolute; left: 0; top: 0; z-index: -1; }
.apps { display: flex; gap: 4px; }
.apps span { width: 58px; height: 39px; display: grid; place-items: center; }
.apps span:first-child { width: 48px; padding-left: 2px; }
.apps .f { padding-right: 5px; }
.apps .run { background: #d0a96aa0; border: 1px solid #dcb878; outline: 1px solid #8e6a30; }
.apps .act { background: linear-gradient(#d2bb92, #dcc9a6); border-color: #f8efdd; }
.tray { display: flex; align-items: center; color: #fff; padding-right: 18px; }
.tray svg { margin-right: 7px; }
.tray svg:first-child { margin-right: 12px; }
.lang { width: 46px; padding-left: 7px; }
.clock { width: 56px; text-align: center; line-height: 17px; }

/* outline menu */
.menu { position: absolute; left: 703px; top: 95px; width: 186px; height: 259px; background: #fff; border: 1px solid #a0a4aa; padding: 1px; box-shadow: 1px 1px 1px #0003; letter-spacing: -.45px; }
.menu h4 { background: #eff1f5; font-weight: bold; height: 18px; line-height: 19px; padding-left: 7px; letter-spacing: -.9px; }
.swatches, .ramps { display: flex; gap: 4px; padding: 2px 0 0 2px; }
.swatches b { width: 13px; height: 13px; border: 1px solid #dedede; }
.ramps { padding-top: 5px; }
.ramps b { width: 13px; height: 65px; border: 1px solid #e2e4e7; }
.menu .second { margin-top: 3px; line-height: 20px; }
.std { height: 17px; }
.x-fff { background: #fff; } .x-000 { background: #000; } .x-eee { background: #eeece1; } .x-nav { background: #1f497d; } .x-blu { background: #4f81bd; } .x-red { background: #c0504d; } .x-grn { background: #9bbb59; } .x-pur { background: #8064a2; } .x-tea { background: #4bacc6; } .x-org { background: #f79646; }
.r1 { background: linear-gradient(#f2f2f2 20%, #d8d8d8 0 40%, #bfbfbf 0 60%, #a5a5a5 0 80%, #7f7f7f 0); }
.r2 { background: linear-gradient(#7f7f7f 20%, #595959 0 40%, #3f3f3f 0 60%, #262626 0 80%, #0c0c0c 0); }
.r3 { background: linear-gradient(#ddd9c3 20%, #c4bd97 0 40%, #938953 0 60%, #494429 0 80%, #1d1b10 0); }
.r4 { background: linear-gradient(#c6d9f0 20%, #8db3e2 0 40%, #548dd4 0 60%, #17365d 0 80%, #0f243e 0); }
.r5 { background: linear-gradient(#dbe5f1 20%, #b8cce4 0 40%, #95b3d7 0 60%, #366092 0 80%, #244061 0); }
.r6 { background: linear-gradient(#f2dcdb 20%, #e5b9b7 0 40%, #d99694 0 60%, #953734 0 80%, #632423 0); }
.r7 { background: linear-gradient(#ebf1dd 20%, #d7e3bc 0 40%, #c3d69b 0 60%, #76923c 0 80%, #4f6128 0); }
.r8 { background: linear-gradient(#e5e0ec 20%, #ccc1d9 0 40%, #b2a2c7 0 60%, #5f497a 0 80%, #3f3151 0); }
.r9 { background: linear-gradient(#dbeef3 20%, #b7dde8 0 40%, #92cddc 0 60%, #31859b 0 80%, #205867 0); }
.r10 { background: linear-gradient(#fdeada 20%, #fbd5b5 0 40%, #fac08f 0 60%, #e36c09 0 80%, #974806 0); }
.s-1 { background: #c00000; } .s-2 { background: #f00; } .s-3 { background: #ffc000; } .s-4 { background: #ff0; } .s-5 { background: #92d050; } .s-6 { background: #00b050; } .s-7 { background: #00b0f0; } .s-8 { background: #0070c0; } .s-9 { background: #002060; } .s-10 { background: #7030a0; }
.item { height: 22px; display: flex; align-items: center; }
.mi { width: 24px; height: 22px; border-right: 1px solid #e2e4e8; display: grid; place-items: center; }
.lbl { padding-left: 9px; }
.item u { text-underline-offset: 2px; }
.item .arr { margin-left: auto; margin-right: 9px; border: 4px solid transparent; border-left: 4px solid #777; border-right: 0; }
.item.none { height: 24px; }
.item.none .lbl { padding-left: 8px; }
.empty { width: 16px; height: 16px; border: 1px solid #dcdee2; }
.item.sep { border-top: 1px solid #dfe1e6; height: 24px; padding-top: 1px; }
.item.hot { border: 1px solid #e3c154; border-radius: 2px; background: linear-gradient(#fdf3c4, #fadf82 50%, #fdeeb0); }
.item.hot .mi { border: 0; margin-left: -1px; }
.item.hot .arr { margin-right: 8px; }
.item.dis { color: #a0a0a0; }

.submenu { position: absolute; left: 887px; top: 308px; width: 144px; height: 164px; background: #fff; border: 1px solid #a0a4aa; padding: 0 1px; box-shadow: 1px 1px 1px #0003; letter-spacing: -.55px; }
.lines { display: flex; height: 130px; }
.sscroll { width: 16px; display: flex; flex-direction: column; justify-content: space-between; background: #f2f4f7; margin: 1px 0; }
.sscroll span { height: 17px; border: 1px solid #aab2be; background: linear-gradient(90deg, #f6f7f9, #d9dee6); display: grid; place-items: center; }
.sscroll .tri { border-width: 5px 5px 0; border-top-color: #8b99c0; }
.sscroll .tri.up { border-width: 0 5px 5px; border-bottom-color: #8b99c0; }
.submenu .item { height: 23px; }
.grip { height: 8px; border-top: 1px solid #dfe1e6; background: linear-gradient(#fff, #eceef2); display: flex; gap: 3px; align-items: center; justify-content: center; }
.grip b { width: 2px; height: 2px; background: #aab0ba; }

.watermark { position: absolute; left: 1447px; top: 925px; width: 420px; color: #9a9a9aa6; white-space: normal; display: flex; flex-direction: column; }
.watermark strong { font-weight: normal; font-size: 20px; line-height: 28px; letter-spacing: -.65px; }
.watermark span { font-size: 15px; line-height: 20px; letter-spacing: -.37px; margin-top: -1px; }
```
